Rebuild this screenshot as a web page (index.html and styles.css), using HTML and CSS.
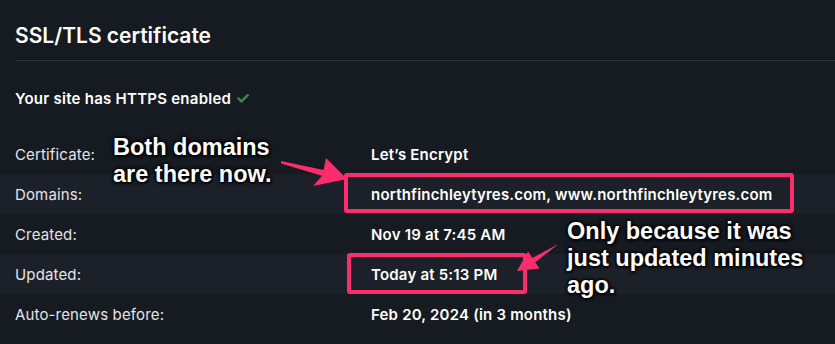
FILE: index.html
```html
<!DOCTYPE html>
<html lang="en">
<head>
    <meta charset="UTF-8">
    <title>SSL/TLS certificate</title>
    <link rel="stylesheet" href="styles.css">
</head>
<body>
    <div class="page">
        <div class="header">
            <h2>SSL/TLS certificate</h2>
        </div>

        <p class="status">Your site has HTTPS enabled <span class="check">&#10003;</span></p>

        <div class="rows">
            <div class="row"><span class="label">Certificate:</span><span class="value">Let’s Encrypt</span></div>
            <div class="row stripe"><span class="label">Domains:</span><span class="value">northfinchleytyres.com, www.northfinchleytyres.com</span></div>
            <div class="row"><span class="label">Created:</span><span class="value">Nov 19 at 7:45 AM</span></div>
            <div class="row stripe"><span class="label">Updated:</span><span class="value">Today at 5:13 PM</span></div>
            <div class="row"><span class="label">Auto-renews before:</span><span class="value">Feb 20, 2024 (in 3 months)</span></div>
        </div>

        <!-- annotations -->
        <div class="box box-domains"></div>
        <div class="box box-updated"></div>

        <svg class="arrows" width="835" height="344" viewBox="0 0 835 344">
            <polygon points="281,161 323.6,170 326,158 347,179 313,186 322,175.8 281,163.5" />
            <polygon points="557.4,244.4 532.4,258 528,251.5 517,271 539.5,268.5 535.2,262.2 556.6,245.6" />
        </svg>

        <div class="note note-domains">Both domains<br>are there now.</div>
        <div class="note note-updated">Only because it was<br>just updated minutes<br>ago.</div>
    </div>
</body>
</html>
```

FILE: styles.css
```css
body {
    margin: 0;
    background-color: #161a21;
    color: #f0f0f0;
    font-family: Inter, "Noto Sans", sans-serif;
}
.page {
    position: relative;
    width: 835px;
    height: 344px;
    overflow: hidden;
}
.header {
    margin-left: 15px;
    padding: 22px 0 10px;
    border-bottom: 1px solid #2e323a;
}
h2 {
    margin: 0;
    font-size: 21px;
    line-height: 28px;
    font-weight: 600;
    color: #ffffff;
}
.status {
    margin: 27px 0 25px 15px;
    font-size: 15px;
    line-height: 20px;
    font-weight: 600;
    letter-spacing: 0.25px;
    color: #ffffff;
}
.check {
    color: #2a9045;
    font-size: 17px;
    font-weight: 700;
}
.row {
    display: grid;
    grid-template-columns: 356px 1fr;
    align-items: center;
    height: 40px;
    padding-left: 15px;
    font-size: 15px;
    letter-spacing: 0.15px;
}
.stripe {
    background-color: #1c2029;
}
.label {
    color: #e4e4e6;
}
.value {
    color: #ffffff;
    font-weight: 600;
    letter-spacing: 0.2px;
}
.box {
    position: absolute;
    border: 4px solid #fd2d6d;
    border-radius: 3px;
    box-sizing: border-box;
}
.box-domains {
    left: 344px;
    top: 173px;
    width: 450px;
    height: 40px;
}
.box-updated {
    left: 347px;
    top: 253px;
    width: 180px;
    height: 41px;
}
.arrows {
    position: absolute;
    left: 0;
    top: 0;
    pointer-events: none;
}
.arrows polygon {
    fill: #fd2d6d;
}
.note {
    position: absolute;
    font-family: "Liberation Sans", Arial, sans-serif;
    font-weight: bold;
    font-size: 23.5px;
    color: #ffffff;
    text-shadow: 0 0 2px #000, 0 0 3px #000, 0 0 4px #000, 1px 1px 3px #000;
}
.note-domains {
    left: 113px;
    top: 134px;
    line-height: 27px;
}
.note-updated {
    left: 567px;
    top: 218px;
    line-height: 27px;
}
```
